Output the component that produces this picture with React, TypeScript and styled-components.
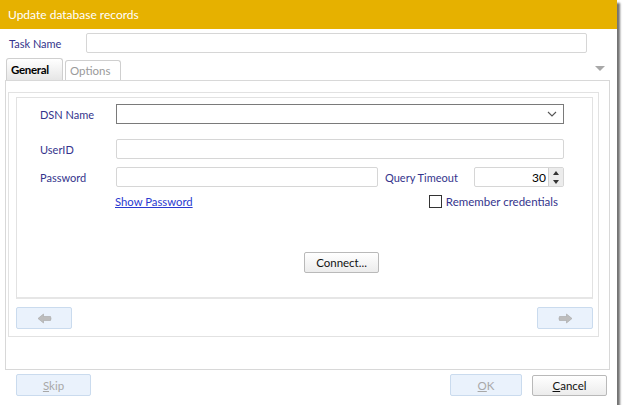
import React from "react";
import styled, { createGlobalStyle } from "styled-components";

const GlobalStyle = createGlobalStyle`
    html, body {
        margin: 0;
        padding: 0;
        background: #ffffff;
    }
    body {
        font-family: Lato, "Open Sans", sans-serif;
        font-size: 11px;
    }
`;

const Window = styled.div`
    width: 617px;
    height: 405px;
    background: #ffffff;
    box-shadow: 3px 3px 2px rgba(0, 0, 0, 0.55);
    display: flex;
    flex-direction: column;
`;

const TitleBar = styled.div`
    height: 29px;
    background: #e6b100;
    color: #ffffff;
    font-size: 12px;
    display: flex;
    align-items: center;
    padding-left: 8px;
    flex-shrink: 0;
`;

const TaskRow = styled.div`
    display: flex;
    align-items: center;
    height: 20px;
    margin-top: 4px;
    padding-left: 9px;
`;

const Label = styled.span<{ $width?: number; $size?: number }>`
    color: #34348c;
    font-size: ${(p) => p.$size ?? 11}px;
    width: ${(p) => (p.$width ? `${p.$width}px` : "auto")};
    flex-shrink: 0;
    white-space: nowrap;
`;

const TextBox = styled.div<{ $width: number; $dark?: boolean }>`
    width: ${(p) => p.$width}px;
    height: 20px;
    box-sizing: border-box;
    border: 1px solid ${(p) => (p.$dark ? "#7a7a7a" : "#d6d6d6")};
    border-radius: ${(p) => (p.$dark ? "0" : "2px")};
    background: #ffffff;
    display: flex;
    align-items: center;
    justify-content: flex-end;
    position: relative;
`;

const TabStrip = styled.div`
    display: flex;
    align-items: flex-end;
    height: 22px;
    margin-top: 5px;
    padding-left: 6px;
    padding-right: 12px;
    position: relative;
`;

const Tab = styled.div<{ $active?: boolean }>`
    height: ${(p) => (p.$active ? "22px" : "20px")};
    width: ${(p) => (p.$active ? "57px" : "56px")};
    box-sizing: border-box;
    margin-right: 2px;
    border: 1px solid #cfcfcf;
    border-bottom: none;
    border-radius: 3px 3px 0 0;
    background: ${(p) =>
        p.$active ? "linear-gradient(#ffffff, #e6e6e6)" : "#ffffff"};
    color: ${(p) => (p.$active ? "#000000" : "#9a9a9a")};
    font-weight: ${(p) => (p.$active ? 700 : 400)};
    letter-spacing: ${(p) => (p.$active ? "-0.3px" : "0")};
    font-size: 11.5px;
    padding-left: 4px;
    display: flex;
    align-items: center;
`;

const StripMenu = styled.div`
    position: absolute;
    right: 12px;
    top: 8px;
    width: 0;
    height: 0;
    border-left: 5px solid transparent;
    border-right: 5px solid transparent;
    border-top: 5px solid #a8a8a8;
`;

const TabPage = styled.div`
    margin: 0 7px 0 5px;
    height: 290px;
    box-sizing: border-box;
    border: 1px solid #d8d8d8;
    padding: 11px 10px 0 2px;
    flex-shrink: 0;
`;

const WizardFrame = styled.div`
    height: 245px;
    box-sizing: border-box;
    border: 1px solid #e2e2e2;
    padding: 4px 5px 0 7px;
    display: flex;
    flex-direction: column;
`;

const ContentBox = styled.div`
    height: 202px;
    box-sizing: border-box;
    border-top: 1px solid #e2e2e2;
    border-left: 1px solid #e2e2e2;
    border-right: 1px solid #e2e2e2;
    border-bottom: 2px solid #e6e6e6;
    padding: 6px 0 0 23px;
    display: flex;
    flex-direction: column;
`;

const FieldRow = styled.div<{ $top: number }>`
    display: flex;
    align-items: center;
    margin-top: ${(p) => p.$top}px;
    height: 20px;
`;

const Chevron = styled.svg`
    position: absolute;
    right: 6px;
    top: 6px;
`;

const SpinButtons = styled.div`
    width: 14px;
    height: 18px;
    border-left: 1px solid #cfcfcf;
    background: #ececec;
    display: flex;
    flex-direction: column;
    align-items: center;
    justify-content: space-around;
`;

const SpinArrow = styled.div<{ $up?: boolean }>`
    width: 0;
    height: 0;
    border-left: 3.5px solid transparent;
    border-right: 3.5px solid transparent;
    ${(p) =>
        p.$up ? "border-bottom: 4px solid #333;" : "border-top: 4px solid #333;"}
`;

const SpinValue = styled.span`
    font-size: 12px;
    color: #000;
    margin-right: 2px;
`;

const LinkRow = styled.div`
    display: flex;
    align-items: center;
    margin-top: 6px;
    height: 16px;
    padding-left: 75px;
`;

const Link = styled.a`
    color: #2a3ad0;
    text-decoration: underline;
    font-size: 11.3px;
    cursor: pointer;
`;

const CheckGroup = styled.label`
    display: flex;
    align-items: center;
    margin-left: auto;
    margin-right: 34px;
    gap: 4px;
`;

const CheckBox = styled.span`
    width: 13px;
    height: 13px;
    box-sizing: border-box;
    border: 1px solid #333;
    background: #fff;
`;

const ConnectRow = styled.div`
    display: flex;
    justify-content: flex-start;
    margin-top: 43px;
    padding-left: 264px;
`;

const Button = styled.button<{ $width: number; $disabled?: boolean }>`
    width: ${(p) => p.$width}px;
    height: ${(p) => (p.$disabled ? "22px" : "21px")};
    box-sizing: border-box;
    border: 1px solid ${(p) => (p.$disabled ? "#cadbee" : "#b9b9b9")};
    border-radius: 2px;
    background: ${(p) =>
        p.$disabled ? "#eaf2fc" : "linear-gradient(#ffffff, #ececec)"};
    color: ${(p) => (p.$disabled ? "#a8a8a8" : "#111111")};
    font-family: Lato, "Open Sans", sans-serif;
    font-size: 11.5px;
    padding: 0;
    display: flex;
    align-items: center;
    justify-content: center;
`;

const NavRow = styled.div`
    display: flex;
    justify-content: space-between;
    margin-top: 8px;
`;

const Footer = styled.div`
    display: flex;
    align-items: center;
    margin-top: 4px;
    padding: 0 10px 0 16px;
    gap: 10px;
`;

const Spacer = styled.div`
    flex: 1;
`;

const Key = styled.span`
    text-decoration: underline;
`;

const Arrow = ({ left }: { left?: boolean }) => (
    <svg width="15" height="11" viewBox="0 0 15 11">
        <path
            d={
                left
                    ? "M1 5.5 L6.5 1 L6.5 3.5 L13.5 3.5 Q14.5 5.5 13.5 7.5 L6.5 7.5 L6.5 10 Z"
                    : "M14 5.5 L8.5 1 L8.5 3.5 L1.5 3.5 Q0.5 5.5 1.5 7.5 L8.5 7.5 L8.5 10 Z"
            }
            fill="#bdbdbd"
            stroke="#a6a6a6"
            strokeWidth="0.6"
        />
    </svg>
);

const App = () => {
    return (
        <>
            <GlobalStyle />
            <Window>
                <TitleBar>Update database records</TitleBar>
                <TaskRow>
                    <Label $width={77}>Task Name</Label>
                    <TextBox $width={501} />
                </TaskRow>
                <TabStrip>
                    <Tab $active>General</Tab>
                    <Tab>Options</Tab>
                    <StripMenu />
                </TabStrip>
                <TabPage>
                    <WizardFrame>
                        <ContentBox>
                            <FieldRow $top={0}>
                                <Label $width={76}>DSN Name</Label>
                                <TextBox $width={448} $dark>
                                    <Chevron width="10" height="6" viewBox="0 0 10 6">
                                        <path d="M1 1 L5 5 L9 1" fill="none" stroke="#555" strokeWidth="1.1" />
                                    </Chevron>
                                </TextBox>
                            </FieldRow>
                            <FieldRow $top={15}>
                                <Label $width={76}>UserID</Label>
                                <TextBox $width={448} />
                            </FieldRow>
                            <FieldRow $top={8}>
                                <Label $width={76}>Password</Label>
                                <TextBox $width={262} />
                                <Label $width={89} style={{ marginLeft: 7 }}>
                                    Query Timeout
                                </Label>
                                <TextBox $width={90}>
                                    <SpinValue>30</SpinValue>
                                    <SpinButtons>
                                        <SpinArrow $up />
                                        <SpinArrow />
                                    </SpinButtons>
                                </TextBox>
                            </FieldRow>
                            <LinkRow>
                                <Link>Show Password</Link>
                                <CheckGroup>
                                    <CheckBox />
                                    <Label $size={11.5}>Remember credentials</Label>
                                </CheckGroup>
                            </LinkRow>
                            <ConnectRow>
                                <Button $width={75}>Connect...</Button>
                            </ConnectRow>
                        </ContentBox>
                        <NavRow>
                            <Button $width={56} $disabled>
                                <Arrow left />
                            </Button>
                            <Button $width={56} $disabled>
                                <Arrow />
                            </Button>
                        </NavRow>
                    </WizardFrame>
                </TabPage>
                <Footer>
                    <Button $width={75} $disabled>
                        <span><Key>S</Key>kip</span>
                    </Button>
                    <Spacer />
                    <Button $width={72} $disabled>
                        <span><Key>O</Key>K</span>
                    </Button>
                    <Button $width={75}>
                        <span><Key>C</Key>ancel</span>
                    </Button>
                </Footer>
            </Window>
        </>
    );
};

export default App;
